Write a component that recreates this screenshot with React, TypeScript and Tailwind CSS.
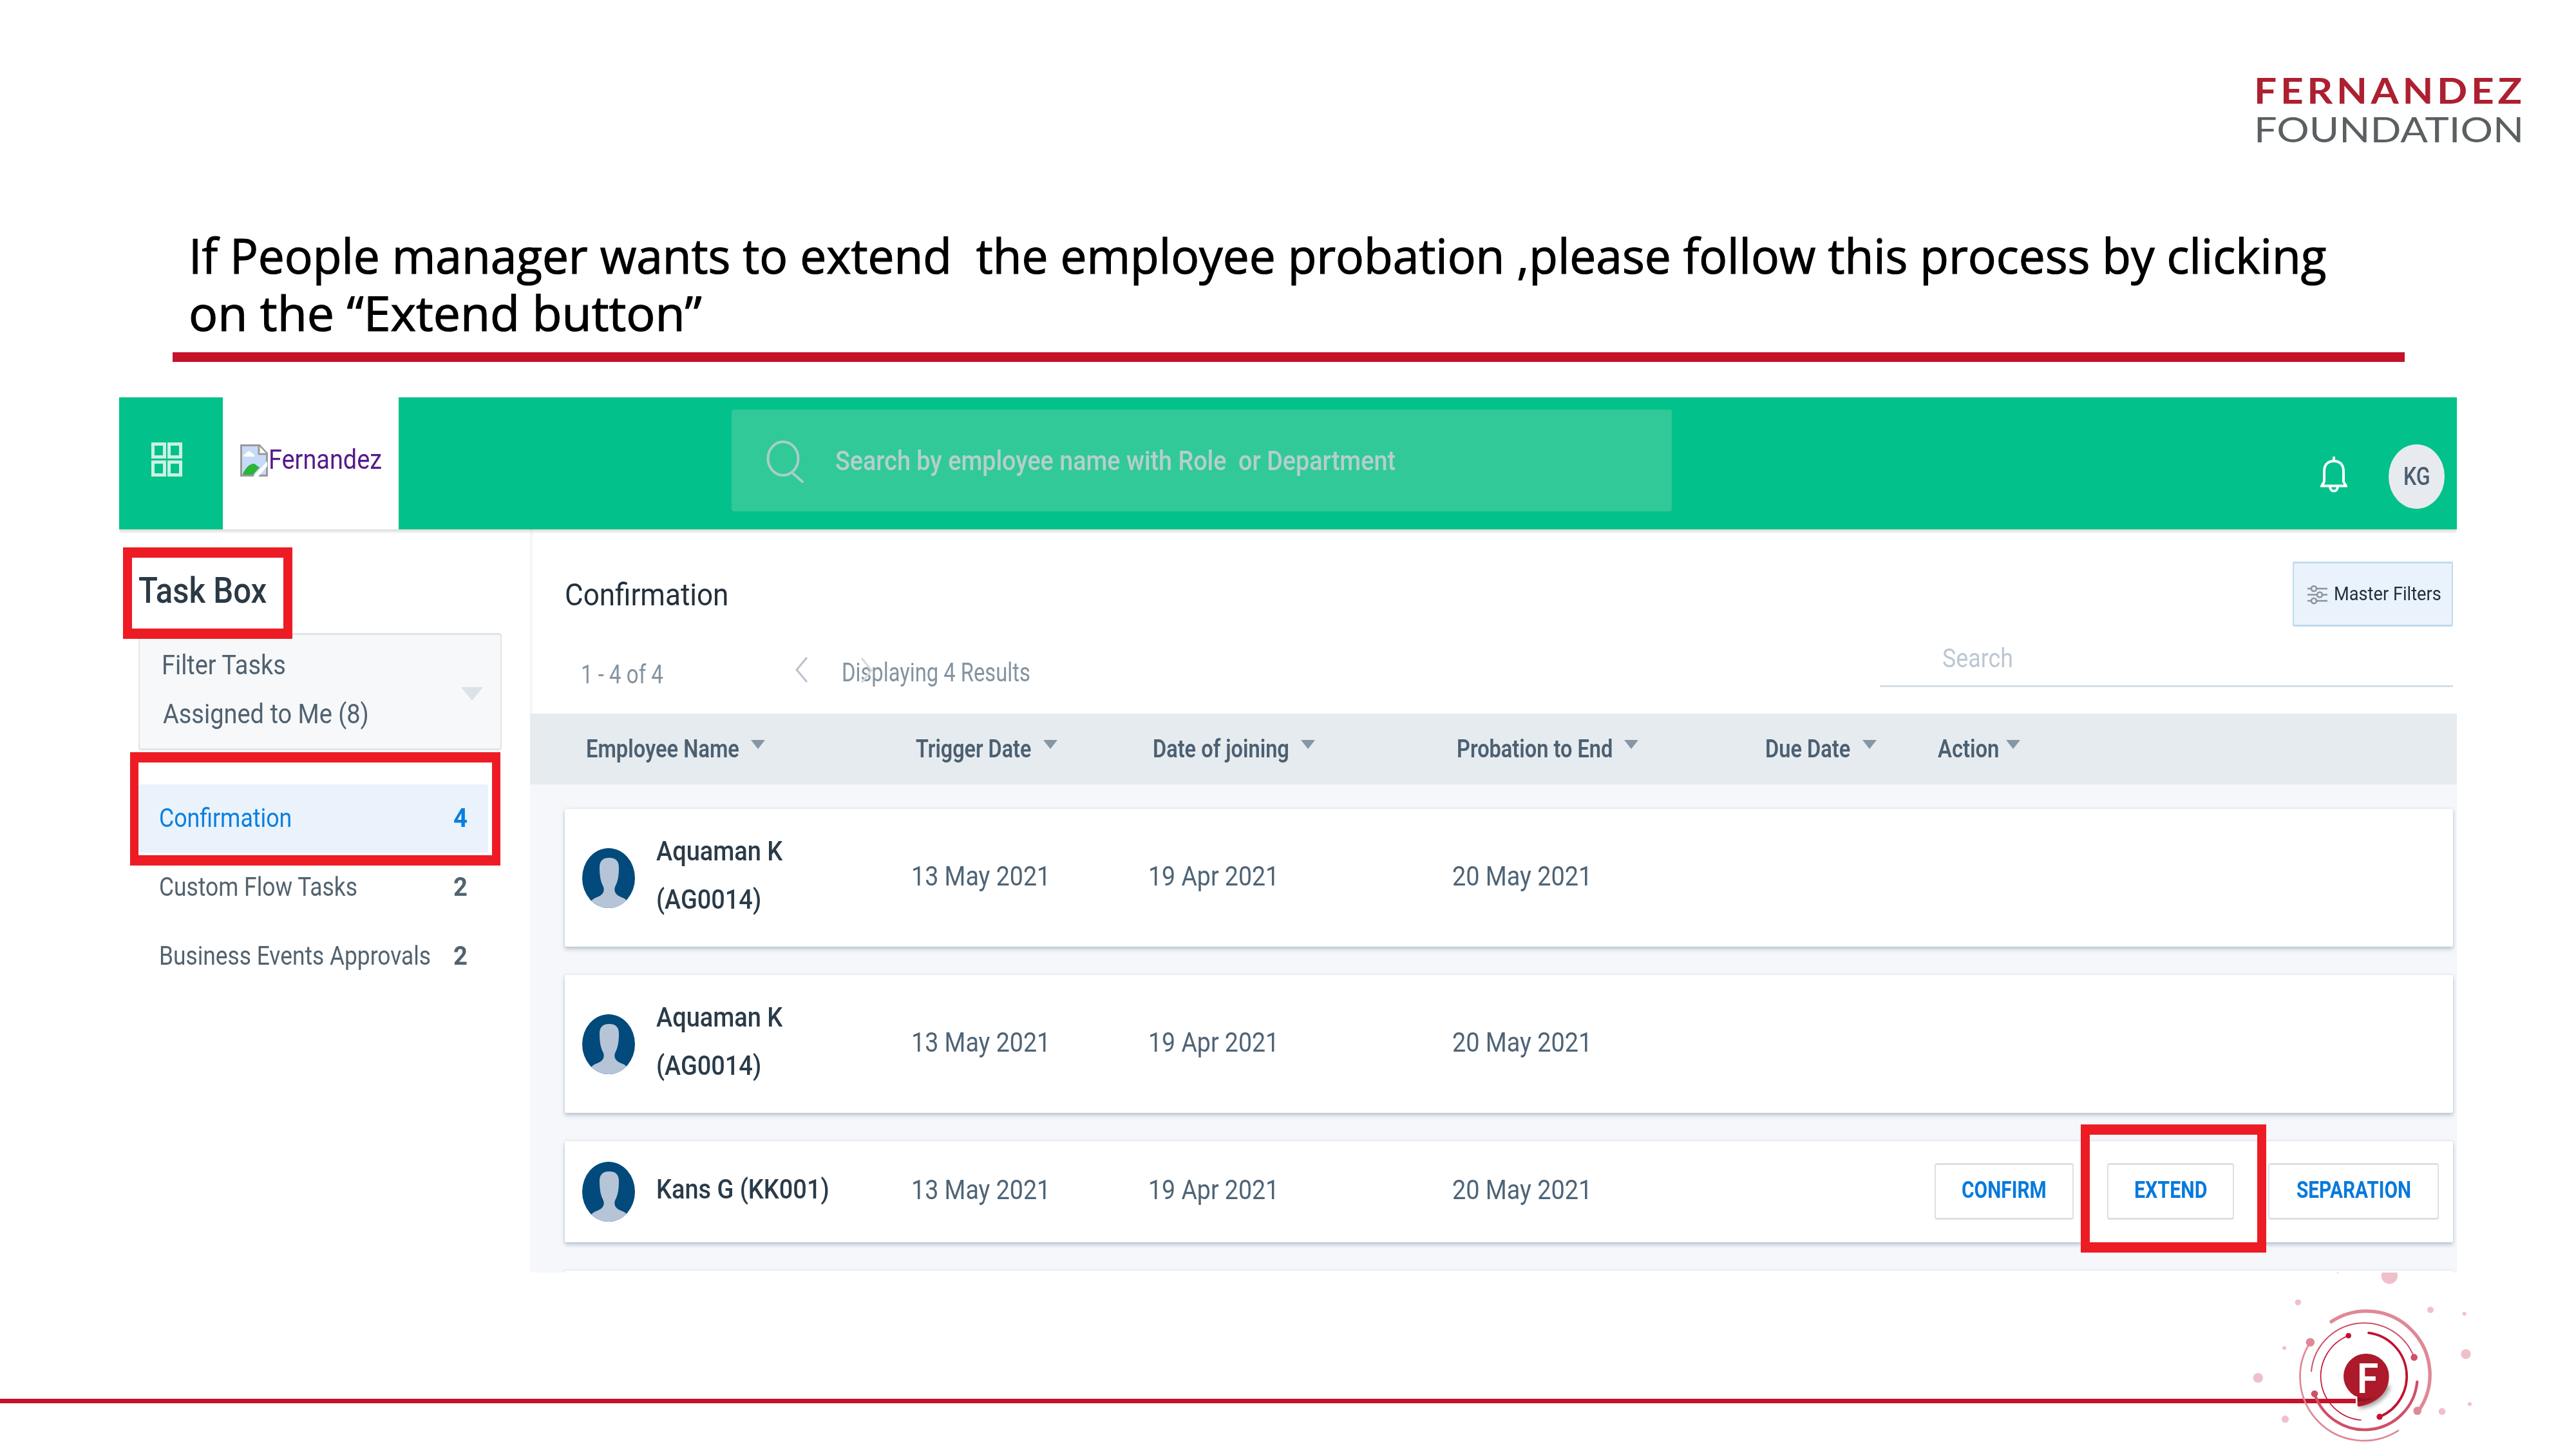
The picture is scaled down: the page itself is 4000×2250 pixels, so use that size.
import { useLayoutEffect, useRef, useState } from "react";
import type { ReactNode } from "react";

/** Single-line text stretched horizontally to fill the width of its box. */
function Fit({ className, children }: { className: string; children: ReactNode }) {
  const outer = useRef<HTMLSpanElement>(null);
  const inner = useRef<HTMLSpanElement>(null);
  const [scale, setScale] = useState(1);
  useLayoutEffect(() => {
    if (outer.current && inner.current) {
      setScale(outer.current.clientWidth / inner.current.offsetWidth);
    }
  }, []);
  return (
    <span ref={outer} className={"block shrink-0 " + className}>
      <span
        ref={inner}
        className="inline-block origin-left whitespace-pre align-top"
        style={{ transform: `scaleX(${scale})` }}
      >
        {children}
      </span>
    </span>
  );
}

function Person() {
  return (
    <svg className="h-[93px] w-[82px] shrink-0" viewBox="0 0 82 93" preserveAspectRatio="none">
      <defs>
        <clipPath id="face">
          <ellipse cx="41" cy="46.5" rx="41" ry="46.5" />
        </clipPath>
      </defs>
      <ellipse cx="41" cy="46.5" rx="41" ry="46.5" fill="#014a7b" />
      <path
        clipPath="url(#face)"
        fill="#b6c4d7"
        d="M42 15c-11 0-15 6-15 15 0 14 2 22 5 28 2 4 2 7 1 10-2 5-7 7-12 9-4 2-6 3-7 6v12h56V83c-1-3-3-4-7-6-5-2-10-4-12-9-1-3-1-6 1-10 3-6 5-14 5-28 0-9-4-15-15-15z"
      />
    </svg>
  );
}

function SortArrow() {
  return (
    <svg className="mt-[41px] h-[14px] w-[22px] shrink-0 self-start" viewBox="0 0 22 14">
      <path d="M0 0H22L11 14Z" fill="#8696a5" />
    </svg>
  );
}

type Col = { label: string; col: string; text: string; gap: string };
const columns: Col[] = [
  { label: "Employee Name", col: "w-[512px]", text: "w-[238px]", gap: "gap-[18px]" },
  { label: "Trigger Date", col: "w-[368px]", text: "w-[179px]", gap: "gap-[19px]" },
  { label: "Date of joining", col: "w-[472px]", text: "w-[212px]", gap: "gap-[18px]" },
  { label: "Probation to End", col: "w-[479px]", text: "w-[242px]", gap: "gap-[18px]" },
  { label: "Due Date", col: "w-[268px]", text: "w-[132px]", gap: "gap-[19px]" },
  { label: "Action", col: "w-[300px]", text: "w-[95px]", gap: "gap-[11px]" },
];

type Line = { text: string; width: string };
type Row = { lines: Line[]; height: string; actions: boolean };
const rows: Row[] = [
  {
    lines: [
      { text: "Aquaman K", width: "w-[196px]" },
      { text: "(AG0014)", width: "w-[163px]" },
    ],
    height: "h-[214px]",
    actions: false,
  },
  {
    lines: [
      { text: "Aquaman K", width: "w-[196px]" },
      { text: "(AG0014)", width: "w-[163px]" },
    ],
    height: "h-[214px]",
    actions: false,
  },
  { lines: [{ text: "Kans G (KK001)", width: "w-[269px]" }], height: "h-[157px]", actions: true },
];

const buttons = [
  { label: "CONFIRM", box: "w-[216px]", text: "w-[132px]" },
  { label: "EXTEND", box: "w-[197px] ml-[52px]", text: "w-[113px]" },
  { label: "SEPARATION", box: "w-[265px] ml-[53px]", text: "w-[178px]" },
];

const cardShadow = "shadow-[0_4px_6px_rgba(100,125,155,0.38),0_0_4px_rgba(150,170,190,0.25)]";

function TopBar() {
  return (
    <div className="relative z-10 flex h-[205px] shrink-0 items-start bg-[#02c18a] shadow-[0_4px_4px_rgba(0,0,0,0.13)]">
      <div className="h-full w-[161px] pt-[70px] pl-[50px]">
        <svg className="h-[53px] w-[48px]" viewBox="0 0 48 53" fill="none" stroke="#c9f2e3" strokeWidth="5">
          <rect x="2.5" y="2.5" width="18" height="20" />
          <rect x="27.5" y="2.5" width="18" height="20" />
          <rect x="2.5" y="30.5" width="18" height="20" />
          <rect x="27.5" y="30.5" width="18" height="20" />
        </svg>
      </div>
      <div className="flex h-full w-[273px] items-start bg-white pl-[27px]">
        <svg className="mt-[73px] h-[50px] w-[43px] shrink-0" viewBox="0 0 43 50">
          <path d="M1.5 1.5H30L41.5 14V48.5H1.5Z" fill="#c6dbf7" stroke="#9a9a9a" strokeWidth="3" />
          <path d="M29 2V15H41" fill="#fff" stroke="#9a9a9a" strokeWidth="3" />
          <path d="M5 19c0-4 3-4 4-5 1-4 8-4 9 0 3 0 4 2 4 5z" fill="#fff" />
          <path d="M4 46C8 36 16 29 22 30l8 6-10 11H4Z" fill="#2bb33a" />
          <path d="M20 50L42 26V34L28 50Z" fill="#fff" />
        </svg>
        <Fit className="mt-[71px] ml-[1px] w-[176px] text-[43px] leading-[50px] text-[#551a8b]">Fernandez</Fit>
      </div>
      <div className="mt-[19px] ml-[517px] flex h-[158px] w-[1460px] items-start rounded-[4px] bg-[#31c998] pl-[54px]">
        <svg className="mt-[48px] h-[66px] w-[59px] shrink-0" viewBox="0 0 59 66" fill="none" stroke="#a9cdc9" strokeWidth="4">
          <ellipse cx="26" cy="28" rx="23.5" ry="26" />
          <path d="M40 50L56 64" strokeLinecap="round" />
        </svg>
        <Fit className="mt-[54px] ml-[48px] w-[870px] text-[43px] leading-[50px] font-medium text-[#b5cfcd]">
          {"Search by employee name with Role  or Department"}
        </Fit>
      </div>
      <svg
        className="mt-[92px] ml-[1007px] h-[56px] w-[42px] shrink-0"
        viewBox="0 0 42 56"
        fill="none"
        stroke="#fff"
        strokeWidth="4"
      >
        <path d="M21 0V7" />
        <path d="M6 39V23C6 12 12 7 21 7S36 12 36 23V39L40 45.5H2Z" />
        <path d="M15 46C15 56 27 56 27 46" />
      </svg>
      <div className="mt-[73px] ml-[64px] flex h-[100px] w-[87px] items-center justify-center rounded-[50%] bg-[#e7ebef]">
        <Fit className="w-[42px] text-[39px] leading-[50px] font-medium text-[#4a5d70]">KG</Fit>
      </div>
    </div>
  );
}

function Sidebar() {
  const label = "text-[40px] leading-[50px] text-[#52636f]";
  return (
    <div className="flex h-full w-[638px] shrink-0 flex-col bg-white">
      <Fit className="mt-[65px] ml-[30px] w-[199px] text-[56px] leading-[60px] font-medium text-[#2b3946]">Task Box</Fit>
      <div className="mt-[36px] ml-[30px] flex h-[182px] w-[564px] shrink-0 items-start rounded-[4px] border-x-2 border-y-3 border-[#e2e5e8] bg-[#f6f8fa] pl-[34px]">
        <div className="w-[465px] pt-[22px] text-[#50616f]">
          <Fit className="w-[193px] text-[42px] leading-[50px]">Filter Tasks</Fit>
          <Fit className="mt-[26px] ml-[2px] w-[320px] text-[42px] leading-[50px]">Assigned to Me (8)</Fit>
        </div>
        <svg className="mt-[81px] h-[21px] w-[34px]" viewBox="0 0 34 21">
          <path d="M0 0H34L17 21Z" fill="#dbe2e8" />
        </svg>
      </div>
      <div className="mt-[53px] ml-[30px] flex h-[106px] w-[543px] shrink-0 items-center rounded-[4px] bg-[#eaf2fc] pl-[32px] text-[#0780e0]">
        <div className="w-[457px]">
          <Fit className="w-[206px] text-[40px] leading-[50px]">Confirmation</Fit>
        </div>
        <Fit className="w-[22px] text-[40px] leading-[50px] font-bold">4</Fit>
      </div>
      <div className="ml-[62px] flex h-[106px] shrink-0 items-center pt-[2px]">
        <div className="w-[457px]">
          <Fit className={"w-[308px] " + label}>Custom Flow Tasks</Fit>
        </div>
        <Fit className={"w-[22px] font-bold " + label}>2</Fit>
      </div>
      <div className="ml-[62px] flex h-[106px] shrink-0 items-center pt-[4px]">
        <div className="w-[457px]">
          <Fit className={"w-[422px] " + label}>Business Events Approvals</Fit>
        </div>
        <Fit className={"w-[22px] font-bold " + label}>2</Fit>
      </div>
    </div>
  );
}

function MainPanel() {
  return (
    <div className="flex h-full w-[2992px] shrink-0 flex-col overflow-hidden bg-[#f5f7fa]">
      <div className="flex h-[151px] shrink-0 items-start border-l-4 border-[#f5f7fa] bg-white pl-[50px]">
        <Fit className="mt-[72px] w-[254px] text-[48px] leading-[60px] text-[#22303c]">Confirmation</Fit>
        <div className="mt-[50px] mr-[6px] ml-auto flex h-[101px] w-[249px] items-start rounded-[3px] border-x-2 border-y-3 border-[#bfdaee] bg-[#eaf2fc] pl-[21px]">
          <svg
            className="mt-[33px] h-[31px] w-[31px] shrink-0"
            viewBox="0 0 31 31"
            fill="none"
            stroke="#8b949d"
            strokeWidth="2.6"
          >
            <path d="M0 6H6M14 6H31M0 15.5H15M23 15.5H31M0 25H6M14 25H31" />
            <circle cx="10" cy="6" r="4" />
            <circle cx="19" cy="15.5" r="4" />
            <circle cx="10" cy="25" r="4" />
          </svg>
          <Fit className="mt-[25px] ml-[10px] w-[167px] text-[29px] leading-[44px] text-[#22303c]">Master Filters</Fit>
        </div>
      </div>
      <div className="flex h-[135px] shrink-0 items-start border-l-4 border-[#f5f7fa] bg-white pl-[75px] text-[#84939f]">
        <Fit className="mt-[50px] w-[128px] text-[40px] leading-[50px]">1 - 4 of 4</Fit>
        <svg className="mt-[46px] ml-[204px] h-[42px] w-[21px] shrink-0" viewBox="0 0 21 42" fill="none" stroke="#b7c3cd" strokeWidth="3">
          <path d="M19 2L3 21L19 40" />
        </svg>
        <div className="relative mt-[47px] ml-[52px]">
          <Fit className="w-[293px] text-[40px] leading-[50px]">Displaying 4 Results</Fit>
          <svg className="absolute top-0 left-[29px] h-[42px] w-[20px]" viewBox="0 0 20 42" fill="none" stroke="#d3dae0" strokeWidth="3">
            <path d="M2 2L17 21L2 40" />
          </svg>
        </div>
        <div className="mr-[6px] ml-auto h-[94px] w-[890px] border-b-3 border-[#d6dfe4] pt-[25px] pl-[97px]">
          <Fit className="w-[110px] text-[40px] leading-[50px] text-[#bdc7d3]">Search</Fit>
        </div>
      </div>
      <div className="flex h-[110px] shrink-0 items-center bg-[#e6ebef] pl-[87px]">
        {columns.map((c) => (
          <div key={c.label} className={"flex h-full shrink-0 items-center " + c.col + " " + c.gap}>
            <Fit className={"text-[39px] leading-[50px] font-semibold text-[#4b6072] " + c.text}>{c.label}</Fit>
            <SortArrow />
          </div>
        ))}
      </div>
      <div className="flex flex-col gap-[44px] pt-[38px] pl-[54px]">
        {rows.map((r, i) => (
          <div
            key={i}
            className={"flex w-[2932px] shrink-0 items-center rounded-[3px] bg-white pl-[27px] " + cardShadow + " " + r.height}
          >
            <Person />
            <div className="ml-[33px] w-[396px] shrink-0 pb-[8px]">
              {r.lines.map((l) => (
                <Fit key={l.text} className={"text-[43px] leading-[75px] font-medium text-[#2a3b49] " + l.width}>
                  {l.text}
                </Fit>
              ))}
            </div>
            <div className="flex w-[1589px] shrink-0 pb-[7px] text-[43px] leading-[74px] text-[#4e6476]">
              <div className="w-[368px]">
                <Fit className="w-[216px]">13 May 2021</Fit>
              </div>
              <div className="w-[472px]">
                <Fit className="w-[203px]">19 Apr 2021</Fit>
              </div>
              <Fit className="w-[217px]">20 May 2021</Fit>
            </div>
            {r.actions &&
              buttons.map((b) => (
                <div
                  key={b.label}
                  className={
                    "mb-[1px] flex h-[88px] shrink-0 items-center justify-center rounded-[4px] border-x-2 border-y-3 border-[#dbe0e5] bg-white pb-[4px] " +
                    b.box
                  }
                >
                  <Fit className={"text-[36px] leading-[50px] font-bold text-[#067adc] " + b.text}>{b.label}</Fit>
                </div>
              ))}
          </div>
        ))}
        <div className="h-[60px] w-[2932px] shrink-0 rounded-[3px] bg-white shadow-[0_0_4px_rgba(150,170,190,0.3)]" />
      </div>
    </div>
  );
}

function Emblem() {
  return (
    <svg className="-ml-[208px] h-[274px] w-[430px] shrink-0" viewBox="0 78 1290 822" fill="none">
      <defs>
        <filter id="soft" x="-30%" y="-30%" width="160%" height="160%">
          <feGaussianBlur stdDeviation="10" />
        </filter>
      </defs>
      <g fill="#f0c0ca">
        <circle cx="781" cy="93" r="38" />
        <circle cx="540" cy="76" r="6" />
        <circle cx="355" cy="217" r="14" />
        <circle cx="972" cy="252" r="15" />
        <circle cx="1130" cy="270" r="9" />
        <circle cx="291" cy="430" r="9" />
        <circle cx="1137" cy="458" r="23" />
        <circle cx="169" cy="569" r="23" />
        <circle cx="1155" cy="691" r="9" />
        <circle cx="1026" cy="725" r="16" />
        <circle cx="295" cy="761" r="17" />
      </g>
      <g strokeLinecap="round">
        <path d="M510 307A296 296 0 0 1 917 722" stroke="#df8896" strokeWidth="16" />
        <path d="M412 403A297 297 0 0 0 822 814" stroke="#df8896" strokeWidth="8" />
        <path d="M417 538A248 248 0 0 1 896 473" stroke="#cf5068" strokeWidth="6" />
        <path d="M432 643A246 246 0 0 0 910 587" stroke="#cf5068" strokeWidth="13" />
        <path d="M590 372A204 204 0 0 0 648 765" stroke="#c2122f" strokeWidth="5" />
        <path d="M684 359A204 204 0 0 1 735 750" stroke="#c2122f" strokeWidth="11" />
      </g>
      <circle cx="412" cy="403" r="20" fill="#df8896" />
      <circle cx="911" cy="722" r="19" fill="#df8896" />
      <circle cx="896" cy="473" r="16" fill="#cf5068" />
      <circle cx="432" cy="643" r="16" fill="#cf5068" />
      <circle cx="590" cy="372" r="13" fill="#c2122f" />
      <circle cx="735" cy="750" r="14" fill="#c2122f" />
      <path
        d="M640 712C700 710 770 670 786 610L700 560L640 640Z"
        fill="#000"
        opacity="0.35"
        filter="url(#soft)"
      />
      <path
        d="M674 456A105 105 0 0 1 779 561C779 650 705 690 640 702Q632 704 632 695V658A105 105 0 0 1 674 456Z"
        fill="#ad1a2b"
      />
      <path d="M632 658Q665 674 715 658Q690 680 632 678Z" fill="#8f1422" />
      <path d="M627 655V700" stroke="#fff" strokeWidth="5" />
      <text
        x="627"
        y="638"
        fill="#fff"
        fontFamily="Lato, sans-serif"
        fontWeight="700"
        fontSize="192"
        textLength="104"
        lengthAdjust="spacingAndGlyphs"
      >
        F
      </text>
    </svg>
  );
}

export default function App() {
  return (
    <div className="relative flex h-[2250px] w-[4000px] flex-col overflow-hidden bg-white font-['Roboto',sans-serif]">
      <div className="mt-[110px] flex h-[120px] shrink-0 flex-col pl-[3500px] font-['Lato',sans-serif] text-[55px] leading-[60px]">
        <Fit className="w-[422px] font-bold tracking-[5px] text-[#ad2030]">FERNANDEZ</Fit>
        <Fit className="w-[419px] text-[#5a5f61]">FOUNDATION</Fit>
      </div>
      <h1 className="mt-[122px] flex shrink-0 flex-col pl-[293px] font-['Open_Sans',sans-serif] text-[75px] leading-[89px] text-black [-webkit-text-stroke:1.2px_#000]">
        <Fit className="w-[3319px]">
          {"If People manager wants to extend  the employee probation ,please follow this process by clicking"}
        </Fit>
        <Fit className="w-[797px]">on the “Extend button”</Fit>
      </h1>
      <div className="mt-[17px] ml-[268px] h-[15px] w-[3466px] shrink-0 bg-[#c4122b]" />
      <div className="mt-[55px] ml-[185px] flex h-[1359px] w-[3630px] shrink-0 flex-col overflow-hidden">
        <TopBar />
        <div className="flex h-[1154px] shrink-0">
          <Sidebar />
          <MainPanel />
        </div>
      </div>
      <div className="flex h-[274px] shrink-0 items-start">
        <div className="mt-[196px] h-[7px] w-[3658px] shrink-0 bg-[#c4122b]" />
        <Emblem />
      </div>
      <div className="absolute top-[850px] left-[191px] h-[142px] w-[263px] border-x-14 border-y-16 border-[#ed1c24]" />
      <div className="absolute top-[1168px] left-[202px] h-[176px] w-[575px] border-x-13 border-y-16 border-[#ed1c24]" />
      <div className="absolute top-[1746px] left-[3231px] h-[199px] w-[288px] border-x-14 border-y-16 border-[#ed1c24]" />
    </div>
  );
}
